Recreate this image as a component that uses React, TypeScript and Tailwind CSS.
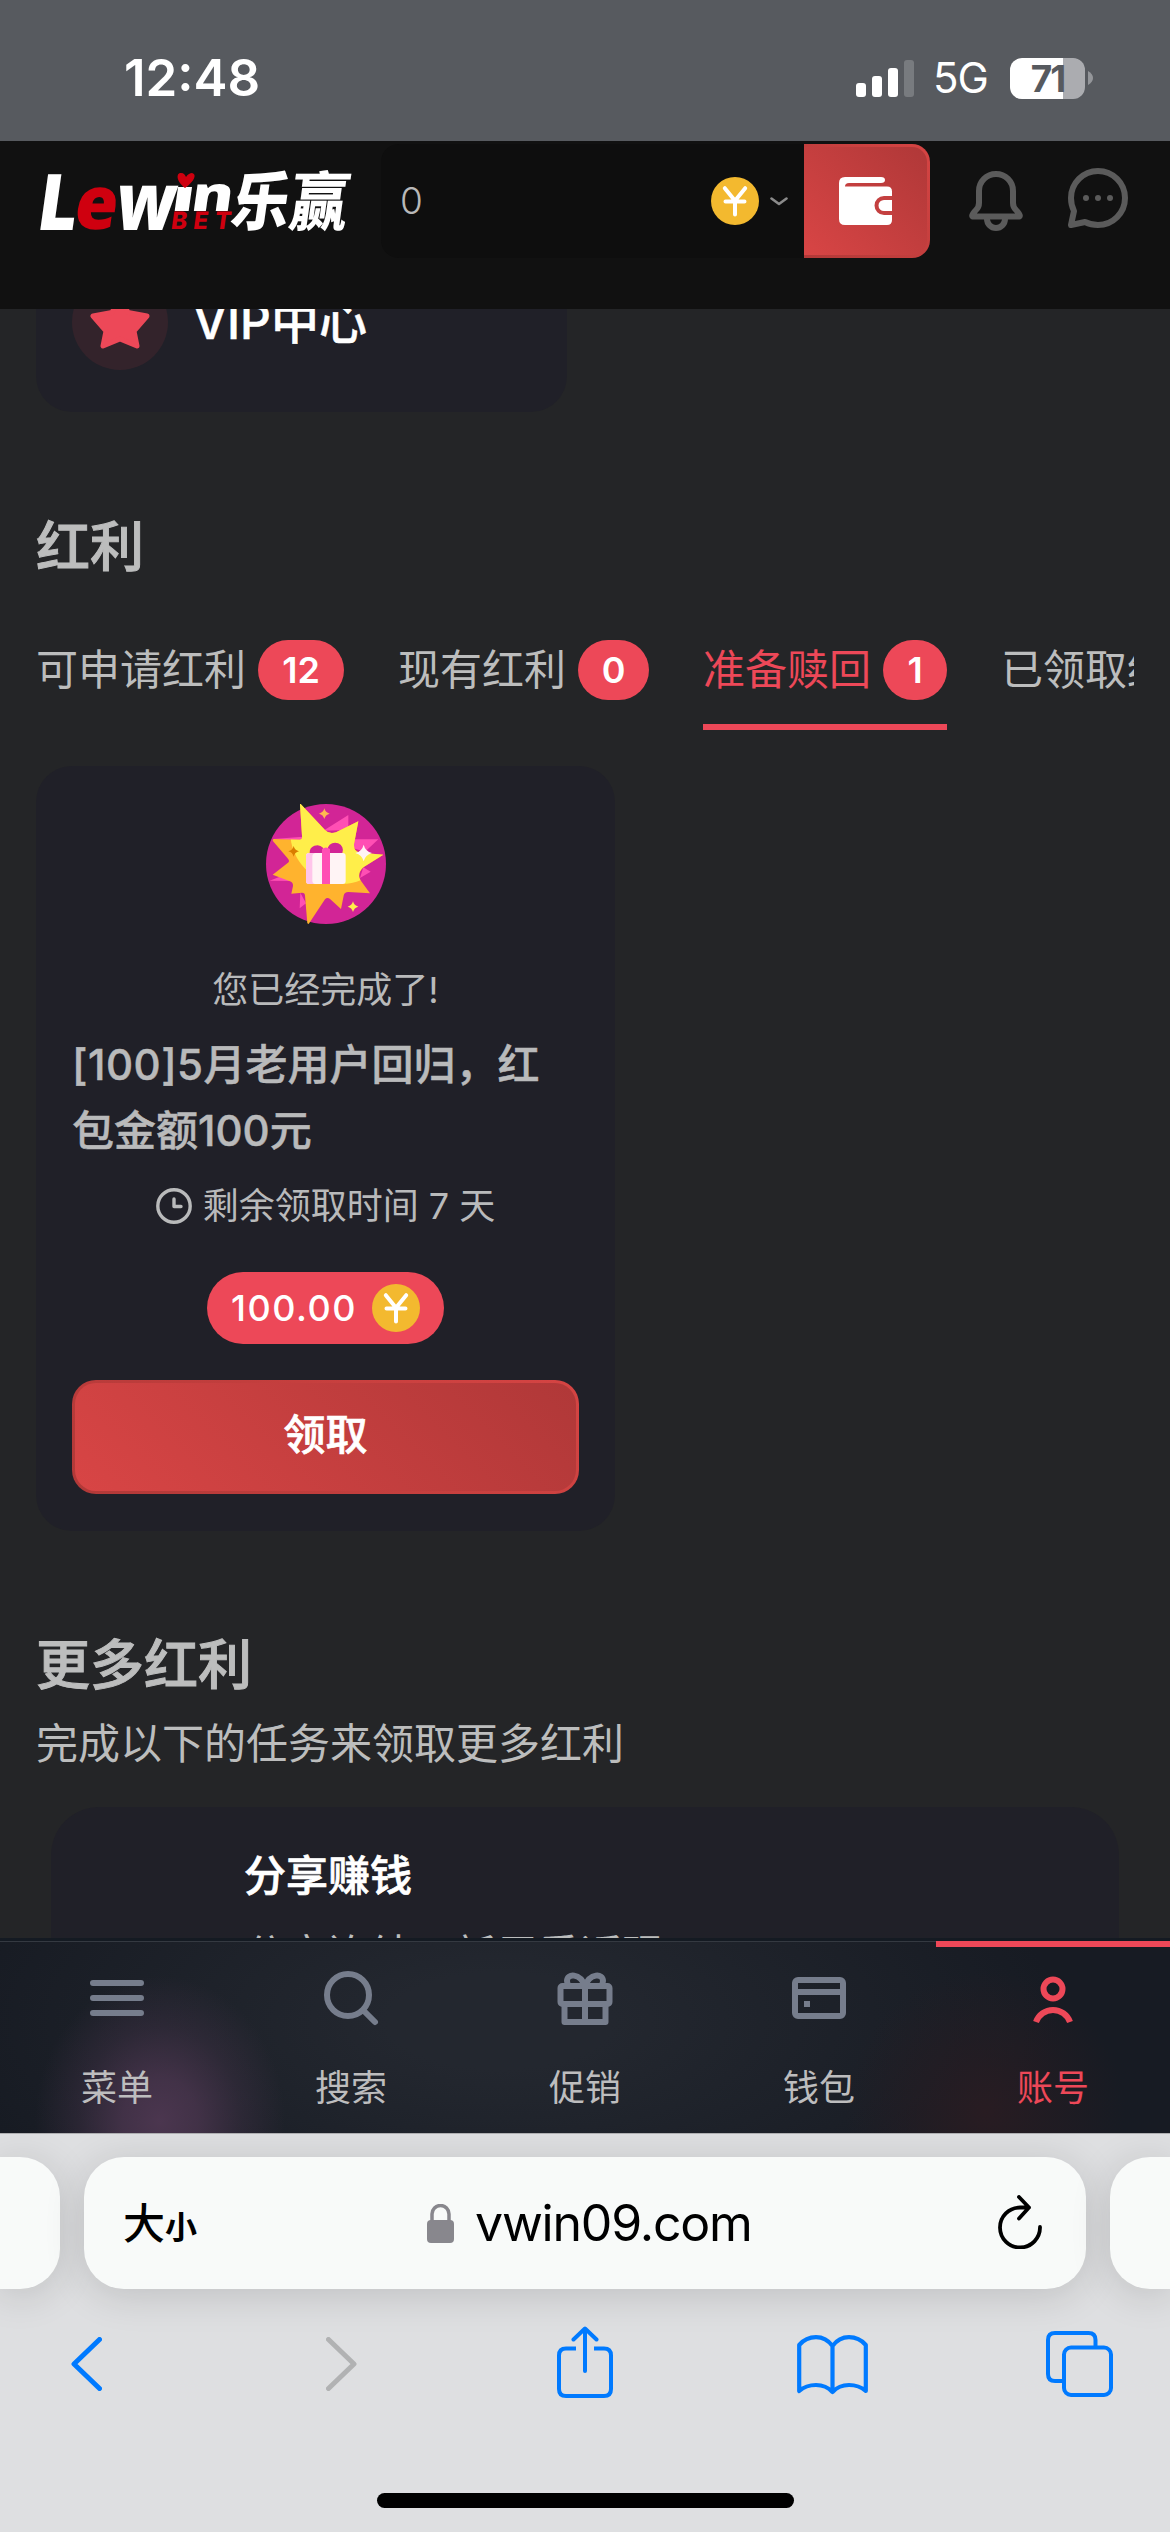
import React from "react";

const sans = "font-['Inter','Noto_Sans_CJK_SC',sans-serif]";

function Coin() {
  return (
    <svg width="48" height="48" viewBox="0 0 48 48" className="shrink-0">
      <circle cx="24" cy="24" r="24" fill="#f3b92f" />
      <path d="M13.8 11.2 24 23.8 34.2 11.2M14.5 24.6h19M24 23.8v13.6" fill="none" stroke="#fff" strokeWidth="4" strokeLinecap="round" strokeLinejoin="round" />
    </svg>
  );
}

function StatusBar() {
  return (
    <div className="flex h-[141px] shrink-0 items-center bg-[#575a5f] pt-[15px] pl-[124px] text-white">
      <span className="w-[732px] text-[51px] leading-[60px] font-semibold">12:48</span>
      <svg width="58" height="38" viewBox="0 0 58 38" fill="#fff">
        <rect x="0" y="24" width="10" height="14" rx="3" />
        <rect x="16" y="17" width="10" height="21" rx="3" />
        <rect x="32" y="9" width="10" height="29" rx="3" />
        <rect x="48" y="1" width="10" height="37" rx="3" fillOpacity=".2" />
      </svg>
      <span className="ml-[19px] w-[77px] text-[42px] leading-[48px] tracking-[-1px]">5G</span>
      <div className="flex h-[41px] w-[75px] items-center justify-center rounded-[12px] bg-[linear-gradient(to_right,#fff_53px,#abacb0_53px)] text-[37px] leading-[41px] font-bold text-[#575a5f]">
        <span className="tracking-[-2px]">71</span>
      </div>
      <svg width="5" height="14" viewBox="0 0 5 14" className="ml-[3px]"><path d="M0 0q5 3 5 7t-5 7z" fill="#94969a" /></svg>
    </div>
  );
}

function Logo() {
  return (
    <svg width="320" height="90" viewBox="0 -20 320 90" className="overflow-visible" fontFamily="'Noto Sans CJK SC', sans-serif" fontWeight="900">
      <g transform="translate(0 60) skewX(-8)" fill="#fff">
        <text x="-3" y="0" fontFamily="'Open Sans', sans-serif" fontWeight="800" fontSize="78" textLength="40" lengthAdjust="spacingAndGlyphs">L</text>
        <text x="34" y="-1" fontFamily="'Open Sans', sans-serif" fontWeight="800" fontSize="74" textLength="43" lengthAdjust="spacingAndGlyphs" fill="#cf000f">e</text>
        <text x="75" y="0" fontFamily="'Open Sans', sans-serif" fontWeight="800" fontSize="80" textLength="60" lengthAdjust="spacingAndGlyphs">w</text>
        <rect x="134" y="-43" width="14" height="24" />
        <text x="149" y="-19" fontFamily="'Open Sans', sans-serif" fontWeight="800" fontSize="48" textLength="42" lengthAdjust="spacingAndGlyphs">n</text>
        <text x="132" y="-1" fontFamily="Inter, sans-serif" fontWeight="800" fontSize="24" letterSpacing="6.500" fill="#cf000f">BET</text>
        <text x="190" y="-5" fontSize="64" textLength="117" lengthAdjust="spacingAndGlyphs">乐赢</text>
      </g>
      <path d="M147 18c-9-7-9-15-4-15 3 0 4 2 5 4 2-3 4-4 6-4 5 1 3 8-7 15z" fill="#cf000f" />
    </svg>
  );
}

function Header() {
  return (
    <header className="flex h-[168px] shrink-0 items-start bg-[#111111] pt-[3px] pl-[38px]">
      <div className="mt-[6px] w-[343px]"><Logo /></div>
      <div className="flex h-[114px] w-[423px] items-center rounded-l-[18px] bg-[#0e0e0e] pl-[19px]">
        <span className="w-[311px] text-[37px] font-light text-[#b8b8b8]">0</span>
        <Coin />
        <svg width="18" height="9" viewBox="0 0 18 9" className="ml-[11px]"><path d="M1.5 1.5 9 7l7.500-5.500" fill="none" stroke="#8b8b8b" strokeWidth="2.600" strokeLinecap="round" strokeLinejoin="round" /></svg>
      </div>
      <div className="h-[114px] w-[126px] rounded-r-[18px] bg-[linear-gradient(45deg,#b23938,#d54443)] py-[3px] pr-[3px]">
        <div className="flex h-[108px] w-[123px] items-center rounded-r-[15px] bg-[linear-gradient(45deg,#d84545,#b03838)] pl-[35px]">
          <svg width="53" height="48" viewBox="0 0 53 48">
            <path d="M6 0h36q4 0 4 3t-4 3H10q-4 0-4 3.500H48q5 0 5 5V43q0 5-5 5H6q-6 0-6-6V6q0-6 6-6z" fill="#fff" />
            <path d="M53 21H45a7.500 7.500 0 0 0 0 15H53" fill="none" stroke="#c44040" strokeWidth="4" />
          </svg>
        </div>
      </div>
      <svg width="54" height="60" viewBox="0 0 54 60" className="mt-[27px] ml-[39px]" fill="none" stroke="#5b5b5b" strokeWidth="6" strokeLinejoin="round">
        <path d="M10 20a17 17 0 0 1 34 0V32q0 4 3 7 5 5 3.500 6.500H3.500Q2 44 7 39q3-3 3-7z" />
        <path d="M18 46v2a9 9 0 0 0 18 0v-2" />
      </svg>
      <svg width="60" height="60" viewBox="0 0 60 60" className="mt-[24px] ml-[45px]">
        <path d="M3 57 6 43Q3 37 3 30A27 27 0 1 1 30 57Q23 57 17 54z" fill="none" stroke="#5b5b5b" strokeWidth="6" strokeLinejoin="round" />
        <g fill="#5b5b5b"><circle cx="18" cy="30" r="3" /><circle cx="30" cy="30" r="3" /><circle cx="42" cy="30" r="3" /></g>
      </svg>
    </header>
  );
}

const tabs = [
  { label: "可申请红利", count: "12", width: "w-[86px]", active: false },
  { label: "现有红利", count: "0", width: "w-[71px]", active: false },
  { label: "准备赎回", count: "1", width: "w-[64px]", active: true },
  { label: "已领取红利", count: "", width: "hidden", active: false },
];

function Tabs() {
  return (
    <div className="mt-[58px] mr-[36px] flex gap-[54px] overflow-hidden">
      {tabs.map((t) => (
        <div key={t.label} className={"flex h-[90px] shrink-0 items-start gap-[12px] border-b-[6px] " + (t.active ? "border-[#ed4858] text-[#ed4858]" : "border-transparent text-[#bcbdbd]")}>
          <span className="text-[42px] leading-[60px] whitespace-nowrap">{t.label}</span>
          {t.count && <span className={"flex h-[60px] items-center justify-center rounded-[30px] bg-[#ed4858] text-[36px] leading-[60px] font-semibold text-white " + t.width}>{t.count}</span>}
        </div>
      ))}
    </div>
  );
}

const burst =
  "M182 72L255 150Q268 164 288 157L355 124L342 193Q340 217 365 218L430 224L370 262Q350 280 361 300L390 340L325 336Q313 336 311 347L303 387L271 358Q262 350 255 358L206 432L202 430L195 347Q195 338 186 338L154 341L159 318Q160 308 150 304L98 284L144 248Q150 243 144 236L98 182L100 177L178 179Q188 180 186 168L180 72Z";

function Spark({ x, y, r, fill }: { x: number; y: number; r: number; fill: string }) {
  return <path transform={`translate(${x} ${y}) scale(${r})`} d="M0-1Q.2-.2 1 0 .2.2 0 1-.2.2-1 0-.2-.2 0-1z" fill={fill} />;
}

function BonusIcon() {
  return (
    <svg width="120" height="120" viewBox="78 72 360 360">
      <clipPath id="light"><circle cx="305" cy="158" r="154" /></clipPath>
      <circle cx="258" cy="252" r="180" fill="#d22596" />
      <path d="M250 152 325 105V150zM335 178 415 178 375 215 340 205zM370 262 392 275 360 294zM89 302 150 278 160 303zM181 338 179 385 198 370zM100 177 190 170 190 184z" fill="#ff4fb4" />
      <path d={burst} fill="#ffb32e" />
      <path d={burst} fill="#ffee4a" clipPath="url(#light)" />
      <path d="M209 219a23 22 0 0 1 40-16v16zM264 202a23 22 0 0 1 43 17h-43z" fill="#d22596" />
      <rect x="198" y="219" width="119" height="93" rx="9" fill="#fff4f5" />
      <path d="M207 219h19q-9 2-9 10v73q0 8 9 10h-19q-9 0-9-9v-75q0-9 9-9z" fill="#ffc5ea" />
      <path d="M246 207q12-9 24 0V312h-24z" fill="#ff4fb4" />
      <Spark x={253} y={101} r={16} fill="#ffb94f" />
      <Spark x={161} y={214} r={16} fill="#d97d00" />
      <Spark x={371} y={219} r={25} fill="#fff4f5" />
      <Spark x={339} y={380} r={16} fill="#ffee4a" />
    </svg>
  );
}

function BonusCard() {
  return (
    <div className="mt-[36px] flex h-[765px] w-[579px] shrink-0 flex-col items-center rounded-[36px] bg-[#202028] px-[36px] pt-[38px] text-[#b9babb]">
      <BonusIcon />
      <p className="mt-[39px] text-[36px] leading-[54px]">您已经完成了!</p>
      <p className="mt-[15px] w-full text-[42px] leading-[66px] font-medium [-webkit-text-stroke:0.5px_#b9babb]">
        <span className="tracking-[0.500px]">[100]5</span>月老用户回归，红<br />包金额<span>100</span>元
      </p>
      <div className="mt-[15px] flex h-[54px] items-center gap-[11px]">
        <svg width="36" height="36" viewBox="0 0 36 36" fill="none" stroke="#b9babb" strokeWidth="3.400" strokeLinecap="round" strokeLinejoin="round"><circle cx="18" cy="18" r="16.200" /><path d="M18 11v7.500h7" /></svg>
        <span className="text-[36px] leading-[54px] whitespace-pre">剩余领取时间 7 天</span>
      </div>
      <div className="mt-[39px] flex h-[72px] w-[237px] items-center justify-between rounded-full bg-[#ed4858] pr-[24px] pl-[24px]">
        <span className="text-[36px] font-medium tracking-[1.500px] text-white">100.00</span>
        <Coin />
      </div>
      <div className="mt-[36px] h-[114px] w-[507px] rounded-[24px] bg-[linear-gradient(45deg,#b23938,#d54443)] p-[3px]">
        <div className="flex h-[108px] items-center justify-center rounded-[21px] bg-[linear-gradient(45deg,#d84545,#b03838)] pb-[5px] text-[42px] font-medium text-white [-webkit-text-stroke:0.7px_white]">领取</div>
      </div>
    </div>
  );
}

const nav = [
  { label: "菜单", icon: <path d="M6 15h48M6 30h48M6 45h48" strokeLinecap="round" /> },
  { label: "搜索", icon: <path d="M48 27a21 21 0 1 1-42 0 21 21 0 0 1 42 0zM42 42 54 54" strokeLinecap="round" /> },
  { label: "促销", icon: <g><rect x="5.500" y="18" width="49" height="18" rx="2" /><path d="M9.500 36v18h41V36M30 18v36M30 18C25 5 12 5 12 13q0 3 2 5M30 18C35 5 48 5 48 13q0 3-2 5" strokeLinejoin="round" /></g> },
  { label: "钱包", icon: <g><rect x="6" y="12" width="48" height="36" rx="3" /><path d="M6 24h48" /><path d="M15 36h6" /></g> },
  { label: "账号", icon: <g><circle cx="30" cy="21" r="9.500" /><path d="M13 54a18 18 0 0 1 34 0" /></g> },
];

function BottomNav() {
  return (
    <nav className="h-[195px] shrink-0 border-t-[3px] border-[#141a22] bg-[radial-gradient(ellipse_125px_145px_at_160px_180px,#4b364f_0%,#4b364fcc_30%,#4b364f55_65%,transparent_100%),radial-gradient(circle_140px_at_985px_170px,#281c22_0%,transparent_100%),radial-gradient(ellipse_560px_240px_at_500px_80px,#23272f_20%,#171b23_100%)]">
      <div className="flex">
        {nav.map((n, i) => (
          <div key={n.label} className={"flex h-[192px] w-[234px] flex-col items-center " + (i === 4 ? "border-t-[6px] border-[#ed4858] pt-[21px] text-[#ed4858]" : "border-t border-[#343941] pt-[26px] text-[#767d8c]")}>
            <svg width="60" height="60" viewBox="0 0 60 60" fill="none" stroke="currentColor" strokeWidth="6">{n.icon}</svg>
            <span className={"mt-[33px] text-[36px] leading-[54px] " + (i === 4 ? "" : "text-[#bdbdbe]")}>{n.label}</span>
          </div>
        ))}
      </div>
    </nav>
  );
}

function BrowserBar() {
  return (
    <div className="h-[399px] shrink-0 overflow-hidden border-t border-[#aeafb1] bg-[#dedfe1]">
      <div className="mt-[23px] flex h-[132px] gap-[24px] [&>div]:bg-[#f8faf9] [&>div]:shadow-[0_6px_40px_rgba(0,0,0,0.14)]">
        <div className="w-[60px] rounded-r-[40px]" />
        <div className="flex w-[1002px] items-center rounded-[40px] pr-[44px] pl-[39px] text-black">
          <span className="flex w-[304px] items-baseline font-medium"><span className="text-[42px]">大</span><span className="text-[32px] font-bold">小</span></span>
          <svg width="27" height="39" viewBox="0 0 27 39"><rect y="16" width="27" height="23" rx="4" fill="#88878d" /><path d="M5 18V10a8.500 8.500 0 0 1 17 0v8" fill="none" stroke="#88878d" strokeWidth="3.500" /></svg>
          <span className="ml-[21px] w-[523px] text-[50px] tracking-[-1.200px]">vwin09.com</span>
          <svg width="44" height="54" viewBox="0 0 44 54" className="-mt-[3px]" fill="none" stroke="#000" strokeWidth="3.800" strokeLinecap="round" strokeLinejoin="round"><path d="M31 12.500H22A20 20 0 1 0 42 32M21 2 31 12.500 21 23.500" /></svg>
        </div>
        <div className="w-[60px] rounded-l-[40px]" />
      </div>
      <div className="mt-[37px] flex h-[72px] items-center pl-[71px] [&_svg]:shrink-0" >
        <svg width="31" height="54" viewBox="0 0 31 54" className="mt-[4px]" fill="none" stroke="#007aff" strokeWidth="5" strokeLinecap="round" strokeLinejoin="round"><path d="M28.500 2.500 3 27 28.500 51.500" /></svg>
        <svg width="31" height="54" viewBox="0 0 31 54" className="mt-[4px] ml-[224px]" fill="none" stroke="#b1b2b3" strokeWidth="5" strokeLinecap="round" strokeLinejoin="round"><path d="M2.500 2.500 28 27 2.500 51.500" /></svg>
        <svg width="56" height="72" viewBox="0 0 56 72" className="ml-[200px]" fill="none" stroke="#007aff" strokeWidth="4"><path d="M19 22.500H9q-7 0-7 7V63q0 7 7 7H47q7 0 7-7V29.500q0-7-7-7H37" /><path d="M28 45V3M16.500 13.500 28 2.500 39.500 13.500" strokeLinecap="round" strokeLinejoin="round" /></svg>
        <svg width="71" height="60" viewBox="0 0 71 60" className="ml-[184px] mt-[5px]" fill="none" stroke="#007aff" strokeWidth="4.200" strokeLinecap="round" strokeLinejoin="round"><path d="M2.200 10Q9 2.200 19 2.200T35.500 11Q42 2.200 52 2.200T68.800 10V56Q62 50 52 50T35.500 57Q29 50 19 50T2.200 56zM35.500 11V57" /></svg>
        <svg width="67" height="66" viewBox="0 0 67 66" className="mt-[3px] ml-[178px]" fill="none" stroke="#007aff" strokeWidth="4"><rect x="18" y="16.500" width="47" height="47.500" rx="7" /><path d="M49.500 16V9q0-7-7-7H9Q2 2 2 9V43q0 7 7 7h8" /></svg>
      </div>
      <div className="mx-auto mt-[95px] h-[15px] w-[417px] rounded-full bg-black" />
    </div>
  );
}

export default function App() {
  return (
    <div className={"flex h-[2532px] w-[1170px] flex-col overflow-hidden bg-[#242527] " + sans}>
      <StatusBar />
      <Header />
      <main className="flex h-[1629px] flex-col overflow-hidden pl-[36px]">
        <div className="-mt-[71px] flex h-[174px] w-[531px] shrink-0 items-center rounded-[36px] bg-[#202028] pl-[36px]">
          <div className="mt-[-6px] flex h-[96px] w-[96px] items-center justify-center rounded-full bg-[#33232b]">
            <svg width="62" height="60" viewBox="0 0 62 60"><path d="M31 5 39 20.500 58 24 45 39 48 54 31 47 14 54 17 39 4 24 23 20.500z" fill="#ed4858" stroke="#ed4858" strokeWidth="5" strokeLinejoin="round" /></svg>
          </div>
          <span className="mt-[-6px] ml-[25px] text-[48px] font-medium text-white [-webkit-text-stroke:0.5px_white]">VIP中心</span>
        </div>
        <h2 className="mt-[96px] text-[54px] leading-[80px] font-medium text-[#bcbdbd] [-webkit-text-stroke:1px_#bcbdbd]">红利</h2>
        <div className="-mt-[6px] shrink-0"><Tabs /></div>
        <BonusCard />
        <h2 className="mt-[95px] text-[54px] leading-[80px] font-medium text-[#bcbdbd] [-webkit-text-stroke:1px_#bcbdbd]">更多红利</h2>
        <p className="mt-[8px] text-[42px] leading-[60px] text-[#bcbdbd]">完成以下的任务来领取更多红利</p>
        <div className="mt-[33px] ml-[15px] h-[300px] w-[1068px] shrink-0 rounded-[48px] bg-[#202028] pt-[39px] pl-[193px]">
          <p className="text-[42px] leading-[60px] font-medium text-white [-webkit-text-stroke:0.7px_white]">分享赚钱</p>
          <p className="mt-[19px] text-[42px] leading-[60px] text-[#bcbdbd]">分享连结，新用重返现</p>
        </div>
      </main>
      <BottomNav />
      <BrowserBar />
    </div>
  );
}
